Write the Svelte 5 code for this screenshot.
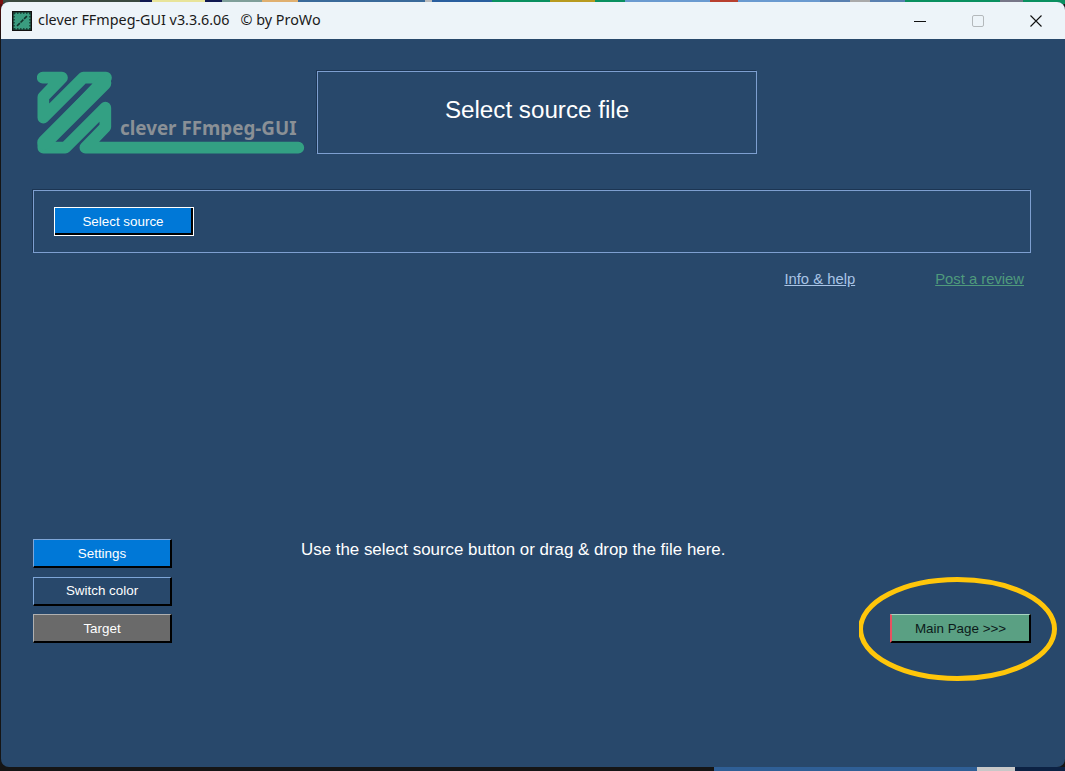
<script>
  let links = [
    { label: "Info & help", cls: "info" },
    { label: "Post a review", cls: "review" },
  ];
  let sideButtons = [
    { label: "Settings", cls: "blue" },
    { label: "Switch color", cls: "navy" },
    { label: "Target", cls: "gray" },
  ];
</script>

<div class="desktop">
  <div class="window">
    <div class="titlebar">
      <svg class="appicon" viewBox="0 0 20 20" aria-hidden="true">
        <rect width="20" height="20" fill="#111" />
        <rect x="1.5" y="1.5" width="17" height="17" fill="#3a9c80" />
        <path d="M2 2h16M2 18h16M2 2v16M18 2v16" stroke="#12332b" stroke-width="1.4" stroke-dasharray="1.5 1.5" />
        <path d="M5 15 15 5" stroke="#12332b" stroke-width="1.6" stroke-dasharray="4 1" />
      </svg>
      <span class="apptitle">clever FFmpeg-GUI v3.3.6.06 &nbsp; © by ProWo</span>
      <div class="grow"></div>
      <div class="ctrl">
        <svg width="12" height="12" viewBox="0 0 12 12"><path d="M0 6.5h12" stroke="#111" stroke-width="1" /></svg>
      </div>
      <div class="ctrl">
        <svg width="12" height="12" viewBox="0 0 12 12"><rect x=".5" y=".5" width="11" height="11" rx="1.5" fill="none" stroke="#b4b9bc" /></svg>
      </div>
      <div class="ctrl">
        <svg width="12" height="12" viewBox="0 0 12 12"><path d="M.5.5l11 11M11.5.5l-11 11" stroke="#111" stroke-width="1.1" /></svg>
      </div>
    </div>

    <div class="content">
      <div class="header">
        <svg class="logo" viewBox="111 213 816 249" aria-label="clever FFmpeg-GUI">
          <path
            class="mark"
            d="M128 233H186L130 291V353L250 233H318L130 431V443H196L316 323V381L256 443H895"
          />
          <path class="mark thick" d="M312 249 134 427" />
          <text x="360" y="405" class="logotext">clever FFmpeg-GUI</text>
        </svg>
        <div class="pagetitle">Select source file</div>
      </div>

      <div class="panel">
        <button class="btn source">Select source</button>
      </div>

      <div class="links">
        {#each links as link}
          <span class="link {link.cls}">{link.label}</span>
        {/each}
      </div>

      <div class="grow"></div>

      <div class="bottom">
        <div class="side">
          {#each sideButtons as b}
            <button class="btn {b.cls}">{b.label}</button>
          {/each}
        </div>
        <div class="hint">Use the select source button or drag &amp; drop the file here.</div>
        <div class="grow"></div>
        <button class="btn main">Main Page &gt;&gt;&gt;</button>
        <svg class="ring" width="200" height="106" viewBox="0 0 200 106" aria-hidden="true">
          <ellipse cx="98.5" cy="52" rx="97" ry="49.5" fill="none" stroke="#ffc60a" stroke-width="5" />
        </svg>
      </div>
    </div>
  </div>
</div>

<style>
  :global(body) {
    margin: 0;
    background: #151515;
  }
  .desktop {
    height: 771px;
    overflow: hidden;
    padding: 2px 0 4px 1px;
    box-sizing: border-box;
    background:
      linear-gradient(90deg, #7a1010 0 3px, #3a4a40 3px 140px, #101850 140px 152px, #e8e49a 152px 205px, #101850 205px 222px, #7f9f9a 222px 262px, #e0b070 262px 298px, #3a6a9a 298px 425px, #bbb 425px 432px, #2a5f9f 432px 492px, #0a9060 492px 550px, #b89a20 550px 595px, #0a9060 595px 625px, #6a9ad0 625px 710px, #b84030 710px 738px, #6a9ad0 738px 820px, #5a80b0 820px 850px, #aaa 850px 870px, #5a80b0 870px 905px, #0a9060 905px 1000px, #778 1000px 1023px, #0a9060 1023px) top / 100% 4px no-repeat,
      linear-gradient(90deg, #151515 0 714px, #2f5f96 714px 977px, #c8c8c8 977px 1015px, #0c2244 1015px) bottom / 100% 4px no-repeat,
      linear-gradient(#5a0c0c, #151515 40px) left / 3px 100% no-repeat,
      #151515;
  }
  .window {
    height: 100%;
    display: flex;
    flex-direction: column;
    background: #28486b;
    border-radius: 8px;
    overflow: hidden;
  }
  .titlebar {
    height: 37px;
    flex: none;
    display: flex;
    align-items: center;
    padding-left: 11px;
    background: #edf4f9;
  }
  .appicon {
    width: 20px;
    height: 20px;
    margin-right: 6px;
  }
  .apptitle {
    font: 14.35px "Noto Sans", "Open Sans", sans-serif;
    color: #1a1a1a;
    margin-top: -2px;
  }
  .grow {
    flex: 1 1 auto;
  }
  .ctrl {
    width: 58px;
    display: flex;
    justify-content: center;
    align-items: center;
  }
  .content {
    flex: 1;
    display: flex;
    flex-direction: column;
    padding: 32px 34px 124px 32px;
    font-family: "Liberation Sans", Arial, sans-serif;
  }
  .header {
    display: flex;
    align-items: stretch;
    padding-left: 4px;
    gap: 8px;
  }
  .logo {
    width: 272px;
    height: 83px;
    flex: none;
  }
  .mark {
    fill: none;
    stroke: #33a083;
    stroke-width: 35;
    stroke-linejoin: round;
    stroke-linecap: round;
  }
  .thick {
    stroke-width: 44;
  }
  .logotext {
    font: 700 56.4px "Noto Sans", "Open Sans", sans-serif;
    fill: #8a9096;
  }
  .pagetitle {
    width: 440px;
    box-sizing: border-box;
    height: 83px;
    padding-bottom: 6px;
    display: flex;
    align-items: center;
    justify-content: center;
    font-size: 24.2px;
    color: #fff;
    border: 1px solid #7e9fd0;
    box-shadow: -1px -1px 0 #1c3553;
  }
  .panel {
    margin-top: 36px;
    height: 63px;
    box-sizing: border-box;
    padding: 16px 20px;
    border: 1px solid #7e9fd0;
    box-shadow: -1px -1px 0 #1c3553;
  }
  .btn {
    display: block;
    margin: 0;
    padding: 0;
    width: 139px;
    height: 29px;
    font: 13.4px "Liberation Sans", Arial, sans-serif;
    color: #fff;
    border-style: solid;
    border-width: 1px 2px 2px 1px;
    border-color: #7ea6d8 #000 #000 #7ea6d8;
  }
  .source {
    width: 140px;
    padding-right: 2px;
    border: 1px solid #fff;
    background: #0078d7;
    box-shadow: inset -2px -2px 0 #000;
  }
  .blue {
    background: #0078d7;
  }
  .navy {
    background: #28486b;
  }
  .gray {
    background: #6a6a6a;
    border-color: #b0b0b0 #000 #000 #b0b0b0;
  }
  .main {
    align-self: flex-end;
    width: 141px;
    color: #0c1a1a;
    background: #5aa083;
    border-color: #a8d4c2 #000 #000 #a8d4c2;
    border-left: 2px solid #e85060;
  }
  .links {
    display: flex;
    justify-content: flex-end;
    gap: 80px;
    margin-top: 18px;
    padding-right: 7px;
    font-size: 14.8px;
  }
  .link {
    text-decoration: underline;
  }
  .info {
    color: #a9c4e6;
  }
  .review {
    color: #4f9a7c;
  }
  .bottom {
    position: relative;
    display: flex;
    height: 104px;
  }
  .side {
    display: flex;
    flex-direction: column;
    gap: 8.5px;
  }
  .hint {
    margin-left: 129px;
    margin-top: 1px;
    font-size: 16.9px;
    color: #fff;
  }
  .ring {
    position: absolute;
    right: -27.5px;
    top: 38px;
  }
</style>
